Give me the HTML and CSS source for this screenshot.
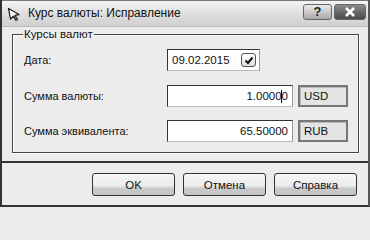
FILE: index.html
```html
<!DOCTYPE html>
<html>
<head>
<meta charset="utf-8">
<link rel="stylesheet" href="styles.css">
</head>
<body>
<div class="window">
  <div class="titlebar">
    <svg class="ticon" width="14" height="14" viewBox="0 0 14 14">
      <polygon points="1.5,1.5 12,7.5 8,8.3 10.5,12.5 9,13.3 6.5,9.2 3.5,12 " fill="#fff" stroke="#222" stroke-width="1.3" stroke-linejoin="round"/>
    </svg>
    <span class="title">Курс валюты: Исправление</span>
    <div class="tbtns">
      <span class="tbtn help">?</span>
      <span class="tbtn close">
        <svg width="12" height="10" viewBox="0 0 12 10"><path d="M2 1 L10 9 M10 1 L2 9" stroke="#fff" stroke-width="2.6"/></svg>
      </span>
    </div>
  </div>
  <div class="body">
    <fieldset class="group">
      <legend>Курсы валют</legend>
      <div class="row r1">
        <span class="label">Дата:</span>
        <div class="field date"><span>09.02.2015</span><span class="chk"><svg width="10" height="9" viewBox="0 0 10 9"><path d="M1.5 4.5 L4 7 L8.5 1.5" fill="none" stroke="#111" stroke-width="2"/></svg></span></div>
      </div>
      <div class="row r2">
        <span class="label">Сумма валюты:</span>
        <div class="field amount"><span class="val">1.00000<i class="caret"></i></span></div>
        <div class="cur">USD</div>
      </div>
      <div class="row">
        <span class="label">Сумма эквивалента:</span>
        <div class="field amount"><span class="val">65.50000</span></div>
        <div class="cur">RUB</div>
      </div>
    </fieldset>
  </div>
  <div class="footer">
    <button class="btn">OK</button>
    <button class="btn">Отмена</button>
    <button class="btn">Справка</button>
  </div>
</div>
</body>
</html>
```
FILE: styles.css
```css
* { box-sizing: border-box; }
html, body { margin: 0; padding: 0; background: #ececec; }
body { width: 370px; height: 208px; overflow: hidden; font-family: "Liberation Sans", Arial, sans-serif; font-size: 11px; color: #111; }

.window {
  width: 370px; height: 207px;
  border-left: 2px solid #333;
  border-right: 2px solid #555;
  border-bottom: 2px solid #333;
  background: #ececec;
  display: flex; flex-direction: column;
}

.titlebar {
  height: 27px;
  flex: none;
  display: flex; align-items: center;
  padding: 0 2px 2px 2px;
  background: linear-gradient(#f4f4f4, #dcdcdc 60%, #d0d0d0);
  border-top: 1px solid #777;
  border-bottom: 1px solid #bbb;
}
.ticon { margin: 2px 7px 0 3px; }
.title { font-size: 12px; font-weight: normal; color: #111; }
.tbtns { margin-left: auto; display: flex; gap: 2px; margin-top: -2px; }
.tbtn {
  height: 16px; border-radius: 3px;
  display: flex; align-items: center; justify-content: center;
  border: 1px solid #666;
}
.help { background: linear-gradient(#ececec, #a8a8a8); font-weight: bold; font-size: 13px; color: #222; width: 29px; }
.close { background: linear-gradient(#8a8a8a, #4a4a4a); width: 32px; }

.body { flex: 1; padding: 1px 11px 0 10px; border-bottom: 2px solid #333; }
.group {
  margin: 0; padding: 8px 10px 0 11px;
  height: 125px;
  border: 1px solid #444;
  box-shadow: inset 1px 1px 0 #fff, 1px 1px 0 #fff;
}
.group legend { padding: 0 1px; margin-left: -1px; font-size: 11.5px; line-height: 13px; }

.row { display: flex; align-items: center; height: 22px; margin-bottom: 13px; }
.r1 { margin-bottom: 14px; }
.label { width: 143px; flex: none; }
.field {
  height: 22px; background: #fff;
  border: 1px solid #333;
  border-right-color: #999; border-bottom-color: #bbb;
  display: flex; align-items: center;
  padding: 0 4px;
  font-size: 11.5px;
}
.date { width: 93px; justify-content: space-between; padding-right: 3px; }
.chk {
  width: 15px; height: 14px; border: 1px solid #555; border-radius: 3px;
  background: linear-gradient(#fff, #ddd);
  display: flex; align-items: center; justify-content: center;
}
.amount { width: 126px; justify-content: flex-end; }
.val { position: relative; }
.caret { position: absolute; right: 6px; top: 0; width: 1px; height: 13px; background: #111; }
.cur {
  width: 50px; height: 22px; margin-left: 5px;
  background: #e4e4e4;
  border: 2px solid #777;
  box-shadow: inset 1px 1px 0 #bbb;
  padding: 0 4px; display: flex; align-items: center;
  font-size: 11.5px;
}

.footer {
  height: 42px; flex: none;
  display: flex; justify-content: flex-end; align-items: flex-start;
  gap: 8px; padding: 10px 11px 0 0;
}
.btn {
  width: 83px; height: 23px;
  font-family: "Liberation Sans", Arial, sans-serif; font-size: 11.5px; color: #111;
  border: 1px solid #333; border-radius: 3px;
  background: linear-gradient(#f6f6f6 0%, #ececec 55%, #c9c9c9 70%, #c4c4c4 100%);
  padding: 0;
}
```
